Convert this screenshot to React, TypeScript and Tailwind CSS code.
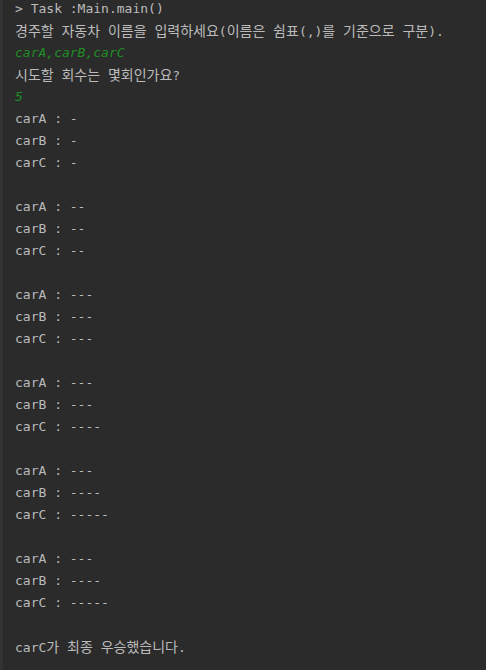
const rounds = [
  ['-', '-', '-'],
  ['--', '--', '--'],
  ['---', '---', '---'],
  ['---', '---', '----'],
  ['---', '----', '-----'],
  ['---', '----', '-----'],
];

const cars = ['carA', 'carB', 'carC'];

// hangul in the console font is a touch wider than Noto's, so bump it up
const withHangul = (text: string) =>
  text.split(/([\uac00-\ud7a3]+)/).map((part, i) =>
    /[\uac00-\ud7a3]/.test(part) ? (
      <span key={i} className="text-[14px]">
        {part}
      </span>
    ) : (
      part
    )
  );

const Line = ({ text = '', input }: { text?: string; input?: boolean }) => (
  <div
    className={
      input
        ? 'h-[22px] leading-[22px] whitespace-pre italic text-[#1f8f24]'
        : 'h-[22px] leading-[22px] whitespace-pre'
    }
  >
    {withHangul(text)}
  </div>
);

const App = () => {
  return (
    <div className="w-[486px] h-[670px] overflow-hidden bg-[#2b2b2b] border-l-[3px] border-[#313335]">
      <div className="-mt-[2px] pl-[12px] text-[13px] text-[#bbbbbb] font-['DejaVu_Sans_Mono','Noto_Sans_CJK_KR',monospace]">
        <Line text="> Task :Main.main()" />
        <Line text="경주할 자동차 이름을 입력하세요(이름은 쉼표(,)를 기준으로 구분)." />
        <Line input text="carA,carB,carC" />
        <Line text="시도할 회수는 몇회인가요?" />
        <Line input text="5" />
        {rounds.map((round, i) => (
          <div key={i}>
            {round.map((bar, j) => (
              <Line key={j} text={`${cars[j]} : ${bar}`} />
            ))}
            <Line />
          </div>
        ))}
        <Line text="carC가 최종 우승했습니다." />
      </div>
    </div>
  );
};

export default App;
